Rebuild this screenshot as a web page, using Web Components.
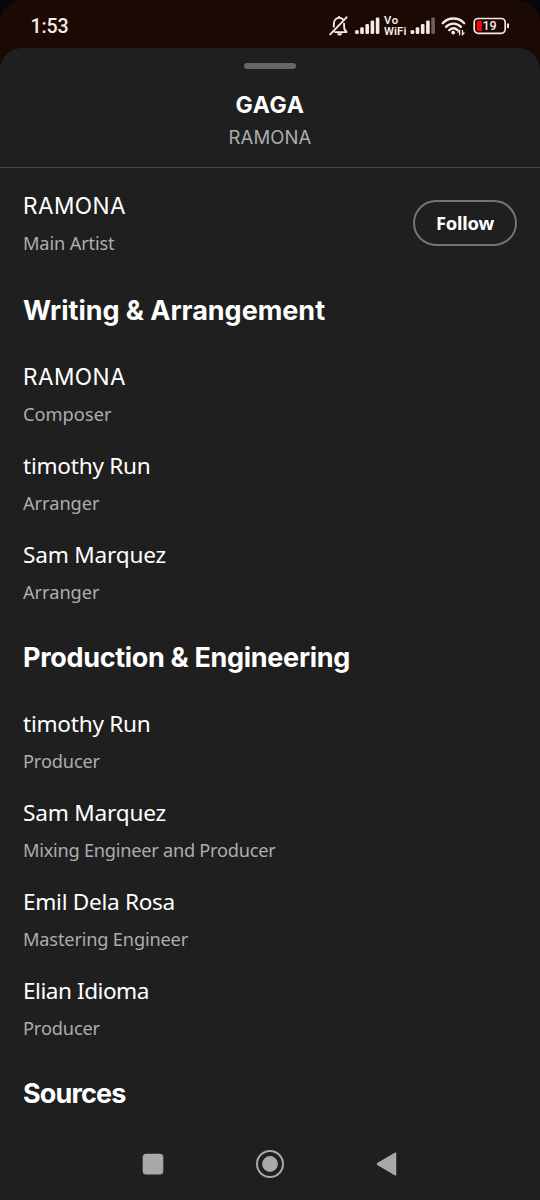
<!DOCTYPE html>
<html lang="en">
<head>
<meta charset="utf-8">
<title>Song credits</title>
<style>
html,body{margin:0;height:1200px;background:#05060a;overflow:hidden}
body{font-family:"Noto Sans","Open Sans",sans-serif;color:#fff}
</style>
</head>
<body>
<credits-screen></credits-screen>
<script>
const define = (name, html, setup) => customElements.define(name, class extends HTMLElement {
  connectedCallback() {
    if (this.shadowRoot) return;
    const t = document.createElement('template');
    t.innerHTML = html;
    this.attachShadow({mode: 'open'}).append(t.content.cloneNode(true));
    if (setup) setup.call(this, this.shadowRoot);
  }
});

/* One line of text whose tracking is adjusted to the advance width in "w". */
define('fit-text', `<style>:host{display:block;white-space:nowrap}span{display:block;width:max-content}</style><span><slot></slot></span>`, function (root) {
  const w = parseFloat(this.getAttribute('w'));
  if (!w) return;
  const s = root.querySelector('span'), n = this.textContent.length;
  s.style.letterSpacing = (w - s.getBoundingClientRect().width) / n + 'px';
});

define('status-bar', `<style>
:host{display:flex;box-sizing:border-box;height:48px;padding:4px 30px 0 30.5px;align-items:center;justify-content:space-between;font-family:Roboto,sans-serif;color:#f8e9e5}
.time{font-size:19.6px;font-weight:500}
.right{display:flex;align-items:center}
svg{display:block;flex:none}
.vo{display:flex;flex-direction:column;font-size:11.300px;line-height:11.500px;font-weight:600;width:22px;margin:0 4px 0 3px}
.bat{display:grid;margin-left:7px}
.bat>*{grid-area:1/1}
.bat span{font-size:12.500px;font-weight:500;line-height:18px;padding-left:9.500px;width:16px}
</style>
<fit-text class="time" w="38">1:53</fit-text>
<div class="right">
<svg width="22" height="22" viewBox="0 0 22 22" fill="none" stroke="#f8e9e5" stroke-width="1.9" stroke-linecap="round" stroke-linejoin="round"><path d="M14.9 4.3C12.600 2.500 9.600 2.600 7.500 4.400C6.300 5.400 6 6.900 5.900 8.500L5.700 11.600M7 17.100H18.600L16.300 13.900L16 8.800M2.200 19.300L18.600 2.300M11 2.600V1.700"/><path d="M9 18.300h5.300c-.5 1.600-1.500 2.300-2.700 2.300s-2.200-.8-2.600-2.300z" fill="#f8e9e5" stroke="none"/></svg>
<svg style="margin-left:4px" width="27" height="18" viewBox="0 0 27 18" fill="#f8e9e5"><rect x="1" y="13" width="3.800" height="4" rx="1.500"/><rect x="6.200" y="10.300" width="3.600" height="6.700" rx="1.300"/><rect x="11.400" y="7" width="3.600" height="10" rx="1.300"/><rect x="16.600" y="3.500" width="3.600" height="13.500" rx="1.300"/><rect x="21.800" y="0.500" width="3.600" height="16.500" rx="1.300"/></svg>
<div class="vo"><fit-text w="15">Vo</fit-text><fit-text w="22.500">WiFi</fit-text></div>
<svg width="27" height="18" viewBox="0 0 27 18" fill="#f8e9e5"><rect x="0.500" y="13" width="3.800" height="4" rx="1.500"/><rect x="5.700" y="10.300" width="3.600" height="6.700" rx="1.300"/><rect x="10.900" y="7" width="3.600" height="10" rx="1.300"/><rect x="16.100" y="3.500" width="3.600" height="13.500" rx="1.300"/><rect x="21.300" y="0.500" width="3.600" height="16.500" rx="1" opacity=".38"/></svg>
<svg style="margin-left:4px" width="25" height="20" viewBox="0 0 25 20" fill="none" stroke="#f8e9e5" stroke-width="2.300" stroke-linecap="round"><path d="M1.700 7.200C7.600 .9 17.400 .9 23.200 7.200M5 10.900c4.200-4.400 10.700-4.400 14.900 0M8.300 14.200c2.600-2.400 5.800-2.400 8.300 0"/><circle cx="12.200" cy="16.600" r="1.900" fill="#f8e9e5" stroke="none"/><path d="M18.600 18.800v-4.200l-1.500 1.500M21.500 14.300v4.200l1.500-1.500" stroke-width="1.300"/></svg>
<div class="bat"><svg width="37" height="18" viewBox="0 0 37 18"><rect x="1.200" y="1.500" width="31" height="14.800" rx="4" fill="none" stroke="#f8e9e5" stroke-width="1.700"/><path d="M5.500 4H9v10H5.500Q3.700 14 3.700 12V6Q3.700 4 5.500 4" fill="#f00808"/><rect x="34" y="6.300" width="2" height="5" rx="1" fill="#f8e9e5"/></svg><span>19</span></div>
</div>`);

define('sheet-header', `<style>
:host{display:flex;flex-direction:column;align-items:center;box-sizing:border-box;height:120px;border-bottom:1px solid #484848}
i{width:52px;height:6px;border-radius:3px;background:#666;margin:15px 0 21.500px}
.t{font:700 23px/28px Inter,sans-serif}
.a{font:400 18.500px/24px Inter,sans-serif;margin-top:6.500px;color:#adadad}
</style><i></i><fit-text class="t" w="69">GAGA</fit-text><fit-text class="a" w="83">RAMONA</fit-text>`);

define('follow-button', `<style>
:host{display:block;flex:none}
button{display:flex;align-items:center;justify-content:center;box-sizing:border-box;width:104px;height:46px;border:2px solid #747474;border-radius:23px;background:none;color:#fff;padding:0;font:700 18.400px/24px "Noto Sans",sans-serif}
</style><button><fit-text w="58">Follow</fit-text></button>`);

define('credit-row', `<style>
:host{display:flex;box-sizing:border-box;height:89px;padding:12px 23px 0;justify-content:space-between}
.n{font-size:22.600px;line-height:32px}
.n.caps{font-family:Inter,sans-serif;font-size:22.600px}
.r{font-size:18.200px;line-height:28px;margin-top:7px;color:#adadad}
::slotted(follow-button){margin-top:10px}
</style><div><fit-text class="n"></fit-text><fit-text class="r"></fit-text></div><slot></slot>`, function (root) {
  for (const [cls, key] of [['n', 'name'], ['r', 'role']]) {
    const [text, w] = this.getAttribute(key).split('|');
    const next = document.createElement('fit-text');
    next.className = cls + (text === text.toUpperCase() ? ' caps' : '');
    next.textContent = text; next.setAttribute('w', w);
    root.querySelector('.' + cls).replaceWith(next);
  }
});

define('section-title', `<style>
:host{display:block;box-sizing:border-box;height:80px;padding:25px 23px 0;font:700 27px/34px Inter,sans-serif}
:host([first]){height:82px;padding-top:27px}
</style><slot></slot>`);

define('nav-bar', `<style>
:host{display:grid;box-sizing:border-box;padding-bottom:5.500px;grid-template-columns:repeat(3,117px);justify-content:center;justify-items:center;align-items:center;height:66px;background:#1f1f1f}
svg{display:block}
</style>
<svg width="24" height="24" viewBox="0 0 24 24"><rect x="1.700" y="1.700" width="20.600" height="20.800" rx="3.500" fill="#a9a9a9"/></svg>
<svg width="30" height="30" viewBox="0 0 30 30"><circle cx="15" cy="15" r="13" fill="none" stroke="#a9a9a9" stroke-width="2"/><circle cx="15" cy="15" r="7.900" fill="#a9a9a9"/></svg>
<svg width="24" height="26" viewBox="0 0 24 26"><path d="M3 12.300L20.500 2.200V23.800L3 13.700Q2 13 3 12.300Z" fill="#a9a9a9" stroke="#a9a9a9" stroke-width="1.500" stroke-linejoin="round"/></svg>`);

define('credits-screen', `<style>
:host{display:flex;flex-direction:column;width:540px;height:1200px;background:#1b0903;border-radius:22px 22px 0 0;overflow:hidden}
main{display:flex;flex-direction:column;flex:1;min-height:0;background:#1f1f1f;border-radius:22px 22px 0 0}
section{flex:1;min-height:0;overflow:hidden;padding-top:10px}
</style>
<status-bar></status-bar>
<main>
<sheet-header></sheet-header>
<section>
<credit-row name="RAMONA|103" role="Main Artist|91.500"><follow-button></follow-button></credit-row>
<section-title first><fit-text w="302">Writing &amp; Arrangement</fit-text></section-title>
<credit-row name="RAMONA|103" role="Composer|88.500"></credit-row>
<credit-row name="timothy Run|127.500" role="Arranger|76.500"></credit-row>
<credit-row name="Sam Marquez|143" role="Arranger|76.500"></credit-row>
<section-title><fit-text w="327">Production &amp; Engineering</fit-text></section-title>
<credit-row name="timothy Run|127.500" role="Producer|77"></credit-row>
<credit-row name="Sam Marquez|143" role="Mixing Engineer and Producer|252.500"></credit-row>
<credit-row name="Emil Dela Rosa|152" role="Mastering Engineer|165"></credit-row>
<credit-row name="Elian Idioma|126" role="Producer|77"></credit-row>
<section-title><fit-text w="102.500">Sources</fit-text></section-title>
</section>
<nav-bar></nav-bar>
</main>`);
</script>
</body>
</html>
